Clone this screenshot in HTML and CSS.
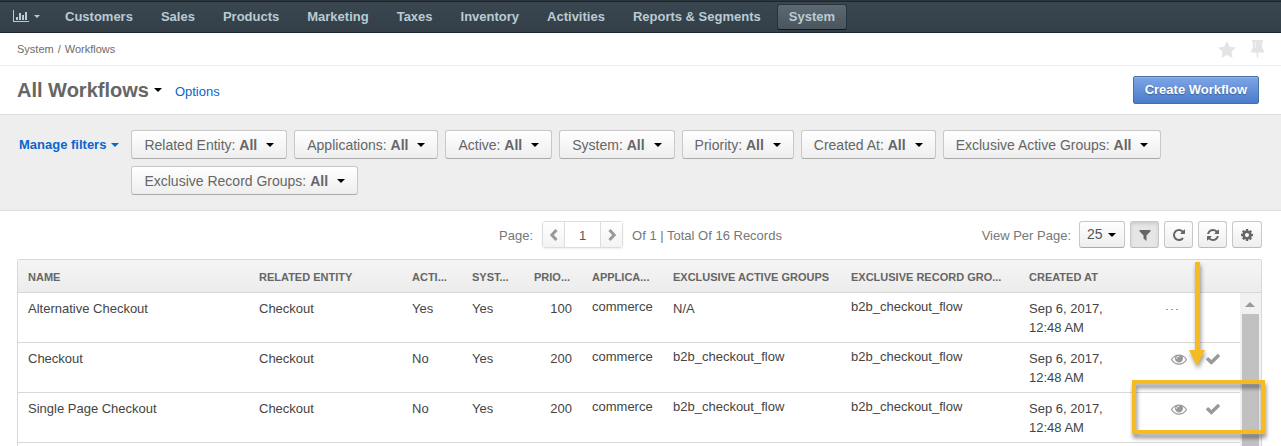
FILE: index.html
```html
<!DOCTYPE html>
<html lang="en">
<head>
<meta charset="utf-8">
<title>All Workflows</title>
<link rel="stylesheet" href="styles.css">
</head>
<body>
<svg class="defs" aria-hidden="true">
  <symbol id="caret" viewBox="0 0 8 4"><path d="M0 0h8L4 4z"/></symbol>
  <symbol id="eye" viewBox="0 0 1792 1792"><path d="M1664 960q-152-236-381-353 61 104 61 225 0 185-131.500 316.500t-316.500 131.500-316.500-131.500-131.500-316.500q0-121 61-225-229 117-381 353 133 205 333.500 326.500t434.500 121.500 434.500-121.500 333.500-326.500zm-720-384q0-20-14-34t-34-14q-125 0-214.500 89.500t-89.500 214.500q0 20 14 34t34 14 34-14 14-34q0-86 61-147t147-61q20 0 34-14t14-34zm848 384q0 34-20 69-140 230-376.500 368.500t-499.500 138.500-499.500-139-376.500-368q-20-35-20-69t20-69q140-229 376.500-368t499.500-139 499.500 139 376.500 368q20 35 20 69z"/></symbol>
  <symbol id="check" viewBox="0 0 1792 1792"><path d="M1671 566q0 40-28 68l-860 860q-28 28-68 28t-68-28l-498-498q-28-28-28-68t28-68l136-136q28-28 68-28t68 28l294 295 656-657q28-28 68-28t68 28l136 136q28 28 28 68z"/></symbol>
</svg>

<div class="usage-strip"></div>
<nav class="nav" aria-label="Main">
  <button class="nav-item nav-dash" type="button" aria-label="Dashboards">
    <svg class="chart" viewBox="0 0 16 12"><path d="M0 0h1v11h15v1H0zM3 7h2v3H3zM6 3h2v7H6zM9 5h2v5H9zM12 2h2v8h-2z"/></svg>
    <svg class="caret caret-small"><use href="#caret"/></svg>
  </button>
  <a class="nav-item" href="#">Customers</a>
  <a class="nav-item" href="#">Sales</a>
  <a class="nav-item" href="#">Products</a>
  <a class="nav-item" href="#">Marketing</a>
  <a class="nav-item" href="#">Taxes</a>
  <a class="nav-item" href="#">Inventory</a>
  <a class="nav-item" href="#">Activities</a>
  <a class="nav-item" href="#">Reports &amp; Segments</a>
  <a class="nav-item nav-active" href="#" aria-current="page">System</a>
</nav>

<div class="crumbs">
  <span>System</span><span class="slash">/</span><span>Workflows</span>
  <div class="crumb-tools">
    <button class="ghost" type="button" aria-label="Add to favorites"><svg class="star" viewBox="0 0 18 17"><path d="M9 0l2.700 5.700 6.300.8-4.600 4.300L14.600 17 9 14l-5.600 3 1.200-6.200L0 6.500l6.300-.8z"/></svg></button>
    <button class="ghost" type="button" aria-label="Pin"><svg class="pin" viewBox="0 0 13 18"><path d="M1 0h11v2h-1v6q2 1 2 4.500H7.500L7 18H6l-.5-5.500H0Q0 9 2 8V2H1z"/><path class="pin-shine" d="M4 2h1v6H4z"/></svg></button>
  </div>
</div>

<header class="title-bar">
  <h1>All Workflows</h1>
  <svg class="caret dark"><use href="#caret"/></svg>
  <a class="options" href="#">Options</a>
  <button class="primary" type="button">Create Workflow</button>
</header>

<section class="filters" aria-label="Filters">
  <button class="manage" type="button">Manage filters <svg class="caret"><use href="#caret"/></svg></button>
  <div class="filter-list">
    <button class="filter" type="button"><span>Related Entity: <b>All</b></span><svg class="caret dark"><use href="#caret"/></svg></button>
    <button class="filter" type="button"><span>Applications: <b>All</b></span><svg class="caret dark"><use href="#caret"/></svg></button>
    <button class="filter" type="button"><span>Active: <b>All</b></span><svg class="caret dark"><use href="#caret"/></svg></button>
    <button class="filter" type="button"><span>System: <b>All</b></span><svg class="caret dark"><use href="#caret"/></svg></button>
    <button class="filter" type="button"><span>Priority: <b>All</b></span><svg class="caret dark"><use href="#caret"/></svg></button>
    <button class="filter" type="button"><span>Created At: <b>All</b></span><svg class="caret dark"><use href="#caret"/></svg></button>
    <button class="filter" type="button"><span>Exclusive Active Groups: <b>All</b></span><svg class="caret dark"><use href="#caret"/></svg></button>
    <button class="filter" type="button"><span>Exclusive Record Groups: <b>All</b></span><svg class="caret dark"><use href="#caret"/></svg></button>
  </div>
</section>

<div class="toolbar">
  <div class="pagination">
    <label for="page">Page:</label>
    <div class="pager">
      <button type="button" aria-label="Previous page"><svg viewBox="0 0 8 12"><path d="M6.500 1L1.800 6l4.700 5"/></svg></button>
      <input id="page" type="text" value="1">
      <button type="button" aria-label="Next page"><svg viewBox="0 0 8 12"><path d="M1.500 1l4.700 5-4.700 5"/></svg></button>
    </div>
    <span class="total">Of 1 | Total Of 16 Records</span>
  </div>
  <div class="view">
    <label for="per-page">View Per Page:</label>
    <div class="select-wrap">
      <select id="per-page"><option>25</option><option>50</option></select>
      <svg class="caret dark"><use href="#caret"/></svg>
    </div>
    <button class="tool pressed" type="button" aria-label="Filters"><svg viewBox="0 0 14 14"><path d="M1.500 2h11v1.200L8.500 7.500V13l-3-2.500v-3l-4-4.300z"/></svg></button>
    <button class="tool" type="button" aria-label="Refresh"><svg viewBox="0 0 1536 1536"><path d="M1536 128v448q0 26-19 45t-45 19h-448q-42 0-59-40-17-39 14-69l138-138q-148-137-349-137-104 0-198.500 40.500t-163.500 109.500-109.500 163.500-40.500 198.500 40.500 198.500 109.500 163.500 163.500 109.500 198.500 40.500q119 0 225-52t179-147q7-10 23-12 14 0 25 9l137 138q9 8 9.500 20.500t-7.500 22.500q-109 132-264 204.500t-327 72.500q-156 0-298-61t-245-164-164-245-61-298 61-298 164-245 245-164 298-61q147 0 284.500 55.500t244.500 156.500l130-129q29-31 70-14 39 17 39 59z"/></svg></button>
    <button class="tool" type="button" aria-label="Reset"><svg viewBox="0 0 1536 1536"><path d="M1511 928q0 5-1 7-64 268-268 434.500t-478 166.500q-146 0-282.500-55t-243.500-157l-129 129q-19 19-45 19t-45-19-19-45v-448q0-26 19-45t45-19h448q26 0 45 19t19 45-19 45l-137 137q71 66 161 102t187 36q134 0 250-65t186-179q11-17 53-117 8-23 30-23h192q13 0 22.500 9.500t9.500 22.500zm25-800v448q0 26-19 45t-45 19h-448q-26 0-45-19t-19-45 19-45l138-138q-148-137-349-137-134 0-250 65t-186 179q-11 17-53 117-8 23-30 23H50q-13 0-22.500-9.500T18 608v-7q65-268 270-434.500T768 0q146 0 284 55.500t245 156.500l130-129q19-19 45-19t45 19 19 45z"/></svg></button>
    <button class="tool tool-settings" type="button" aria-label="Grid settings"><svg viewBox="0 0 1536 1536"><path d="M1024 768q0-106-75-181t-181-75-181 75-75 181 75 181 181 75 181-75 75-181zm512-109v222q0 12-8 23t-20 13l-185 28q-19 54-39 91 35 50 107 138 10 12 10 25t-9 23q-27 37-99 108t-94 71q-12 0-26-9l-138-108q-44 23-91 38-16 136-29 186-7 28-36 28H657q-14 0-24.500-8.500T621 1506l-28-184q-49-16-90-37l-141 107q-10 9-25 9-14 0-25-11-126-114-165-168-7-10-7-23 0-12 8-23 15-21 51-66.500t54-70.500q-27-50-41-99L29 913q-13-2-21-12.500T0 877V655q0-12 8-23t19-13l186-28q14-46 39-92-40-57-107-138-10-12-10-24 0-10 9-23 26-36 98.500-107.500T337 135q13 0 26 10l138 107q44-23 91-38 16-136 29-186 7-28 36-28h222q14 0 24.500 8.500T915 30l28 184q49 16 90 37l142-107q9-9 24-9 13 0 25 10 129 119 165 170 7 8 7 22 0 12-8 23-15 21-51 66.500t-54 70.500q26 50 41 98l183 28q13 2 21 12.500t8 23.500z"/></svg></button>
  </div>
</div>

<main class="grid-area">
  <div class="grid-panel">
    <table>
      <colgroup>
        <col class="c-name"><col class="c-entity"><col class="c-active"><col class="c-system"><col class="c-priority"><col class="c-apps"><col class="c-group"><col class="c-group"><col class="c-created"><col class="c-actions"><col class="c-scroll">
      </colgroup>
      <thead>
        <tr><th>Name</th><th>Related Entity</th><th>Acti...</th><th>Syst...</th><th>Prio...</th><th>Applica...</th><th>Exclusive Active Groups</th><th>Exclusive Record Gro...</th><th>Created At</th><th></th><th></th></tr>
      </thead>
      <tbody>
        <tr>
          <td>Alternative Checkout</td><td>Checkout</td><td>Yes</td><td>Yes</td><td class="num">100</td><td class="list">commerce</td><td>N/A</td><td class="list">b2b_checkout_flow</td><td>Sep 6, 2017, 12:48 AM</td>
          <td><button class="more" type="button" aria-label="More actions"><svg viewBox="0 0 12 2"><path d="M0 0h2v1H0zM5 0h2v1H5zM10 0h2v1h-2z"/></svg></button></td>
          <td class="scroll" rowspan="4"><svg viewBox="0 0 10 5"><path d="M5 0l5 5H0z"/></svg></td>
        </tr>
        <tr>
          <td>Checkout</td><td>Checkout</td><td>No</td><td>Yes</td><td class="num">200</td><td class="list">commerce</td><td class="list">b2b_checkout_flow</td><td class="list">b2b_checkout_flow</td><td>Sep 6, 2017, 12:48 AM</td>
          <td><div class="actions"><button type="button" aria-label="View"><svg><use href="#eye"/></svg></button><button type="button" aria-label="Activate"><svg><use href="#check"/></svg></button></div></td>
        </tr>
        <tr>
          <td>Single Page Checkout</td><td>Checkout</td><td>No</td><td>Yes</td><td class="num">200</td><td class="list">commerce</td><td class="list">b2b_checkout_flow</td><td class="list">b2b_checkout_flow</td><td>Sep 6, 2017, 12:48 AM</td>
          <td><div class="actions"><button type="button" aria-label="View"><svg><use href="#eye"/></svg></button><button type="button" aria-label="Activate"><svg><use href="#check"/></svg></button></div></td>
        </tr>
        <tr><td></td><td></td><td></td><td></td><td></td><td></td><td></td><td></td><td></td><td></td></tr>
      </tbody>
    </table>
  </div>
  <svg class="arrow" viewBox="0 0 16 104" aria-hidden="true"><path d="M6 0h5v88h5L8 104 0 88h6z"/></svg>
  <div class="callout"></div>
</main>
</body>
</html>
```
FILE: styles.css
```css
* { box-sizing: border-box; }

body {
  margin: 0;
  height: 100vh;
  overflow: hidden;
  display: flex;
  flex-direction: column;
  background: #fff;
  color: #444;
  font: 13px/19px "Liberation Sans", Arial, sans-serif;
}

body > * { flex-shrink: 0; }
a { text-decoration: none; }
button, input, select { font: inherit; color: inherit; margin: 0; }
button { cursor: pointer; padding: 0; border: 0; background: none; }
svg { display: block; fill: currentColor; }
.defs { position: absolute; width: 0; height: 0; }
.caret { width: 8px; height: 4px; }
.caret-small { width: 6px; height: 3px; }
.dark { color: #000; }

/* Header */
.usage-strip { height: 2px; background: #2a343c; border-bottom: 1px solid #1b252d; }

.nav {
  display: flex;
  align-items: center;
  gap: 4px;
  height: 31px;
  padding: 0 13px 1px 1px;
  background: linear-gradient(#3a4750, #343f48);
  border-bottom: 1px solid #1c262e;
  font-weight: bold;
}

.nav-item {
  display: flex;
  align-items: center;
  height: 26px;
  padding: 0 11px 1px;
  border: 1px solid transparent;
  border-radius: 3px;
  color: #b9cbd3;
}

.nav-dash { gap: 5px; padding-right: 8px; }
.chart { width: 16px; height: 12px; }

.nav-active {
  background: linear-gradient(#5c6872, #4a555d);
  border-color: #28323a;
  border-bottom-color: #10181e;
}

/* Breadcrumbs and title */
.crumbs {
  display: flex;
  align-items: center;
  height: 33px;
  padding: 0 17px;
  border-bottom: 1px solid #eee;
  color: #6c6c6c;
  font-size: 11px;
}

.slash { margin: 0 4px; }
.crumb-tools { display: flex; align-items: center; gap: 15px; margin-left: auto; }
.ghost { color: #e4e4e4; }
.star { width: 18px; height: 17px; }
.pin { width: 13px; height: 18px; }
.pin-shine { fill: #f4f4f4; }

.title-bar {
  display: flex;
  align-items: center;
  height: 49px;
  padding: 0 22px 0 17px;
  border-bottom: 1px solid #ddd;
}

h1 { margin: 0 5px 0 0; font-size: 20px; line-height: 24px; color: #666; }
.options { margin-left: 13px; padding-top: 2px; color: #0a66cc; }

.primary {
  height: 28px;
  margin-left: auto;
  padding: 0 11px 1px;
  border: 1px solid #4a6fa5;
  border-radius: 2px;
  background: linear-gradient(#7ea6e6, #4a7bc9);
  box-shadow: inset 0 1px 0 #94b4ea;
  color: #fff;
  font-weight: bold;
  text-shadow: 0 1px 1px #3c5f96;
}

/* Filters */
.filters {
  display: flex;
  align-items: flex-start;
  gap: 12px;
  padding: 15px 19px;
  border-bottom: 1px solid #ddd;
  background: #eee;
}

.manage {
  display: flex;
  align-items: center;
  gap: 5px;
  height: 29px;
  color: #0a66cc;
  font-weight: bold;
  white-space: nowrap;
}

.filter-list { display: flex; flex-wrap: wrap; gap: 7px; }

.filter {
  display: flex;
  align-items: center;
  gap: 9px;
  height: 29px;
  padding: 0 12px;
  border: 1px solid #c8c8c8;
  border-bottom-color: #aaa;
  border-radius: 3px;
  background: linear-gradient(#fff, #eee);
  color: #666;
  font-size: 14px;
}

.filter span { padding-top: 2px; }

/* Toolbar */
.toolbar {
  display: grid;
  grid-template-columns: 1fr auto 1fr;
  align-items: center;
  padding: 10px 19px 11px;
  color: #777;
}

.toolbar label, .total { padding-top: 2px; }
.pagination { display: flex; align-items: center; gap: 9px; grid-column: 2; }

.pager {
  display: flex;
  height: 27px;
  border: 1px solid #ddd;
  border-radius: 3px;
  box-shadow: 0 1px 2px #eee;
}

.pager button {
  display: grid;
  place-items: center;
  width: 21px;
  background: linear-gradient(#fff, #f3f3f3);
  color: #999;
}

.pager svg { width: 8px; height: 12px; fill: none; stroke: currentColor; stroke-width: 3; }

.pager input {
  width: 37px;
  padding: 2px 0 0;
  border: 1px solid #ddd;
  border-width: 0 1px;
  color: #555;
  text-align: center;
}

.view { display: flex; align-items: center; justify-content: flex-end; gap: 5px; }
.view label { margin-right: 3px; }
.select-wrap { position: relative; }
.select-wrap .caret { position: absolute; right: 9px; top: 12px; pointer-events: none; }

.select-wrap select {
  display: block;
  appearance: none;
  width: 46px;
  padding: 0 0 0 7px;
  font-size: 14px;
  color: #555;
}

.select-wrap select, .tool {
  height: 27px;
  border: 1px solid #c8c8c8;
  border-bottom-color: #aaa;
  border-radius: 3px;
  background: linear-gradient(#fff, #eee);
}

.tool { display: grid; place-items: center; width: 29px; border-bottom-color: #bbb; color: #666; }
.tool svg { width: 12px; height: 12px; }
.tool-settings { width: 30px; }
.pressed { background: #e6e6e6; box-shadow: inset 0 2px 3px #ccc; }
.pressed svg { width: 14px; height: 14px; }

/* Grid */
.grid-area { position: relative; flex: 1 0 0; min-height: 0; display: flex; margin: 0 19px 0 17px; }

.grid-panel {
  flex: 1;
  min-width: 0;
  overflow: hidden;
  border: 1px solid #d8d8d8;
  border-bottom: 0;
  border-radius: 3px 3px 0 0;
}

table { width: 100%; table-layout: fixed; border-collapse: separate; border-spacing: 0; }
.c-name { width: 231px; }
.c-entity { width: 153px; }
.c-active { width: 60px; }
.c-system { width: 62px; }
.c-priority { width: 58px; }
.c-apps { width: 81px; }
.c-group { width: 178px; }
.c-created { width: 110px; }
.c-actions { width: 111px; }
.c-scroll { width: 21px; }

thead tr { background: linear-gradient(#f5f5f5, #ececec); }

th {
  height: 33px;
  padding: 2px 0 0 10px;
  border-bottom: 1px solid #d8d8d8;
  overflow: hidden;
  color: #666;
  font-size: 11px;
  text-align: left;
  text-transform: uppercase;
  white-space: nowrap;
}

td { height: 50px; padding: 6px 10px 5px; border-bottom: 1px solid #d8d8d8; vertical-align: top; }
.num { text-align: right; }
.list { line-height: 16px; }

.actions { display: flex; justify-content: flex-end; gap: 18px; padding: 0 9px 0 0; color: #999; }
.actions svg { width: 16px; height: 20px; }
.more { display: flex; height: 22px; align-items: center; margin-left: 27px; color: #999; }
.more svg { width: 12px; height: 2px; }

.scroll {
  padding: 9px 0 0 5px;
  border: 0;
  background: linear-gradient(#c1c1c1, #c1c1c1) 2px 21px / 17px 100% no-repeat, #f1f1f1;
  color: #999;
}

.scroll svg { width: 10px; height: 5px; }

/* Highlight marks over the grid */
.arrow {
  position: absolute;
  top: 3px;
  right: 57px;
  width: 16px;
  height: 104px;
  color: #f4bc22;
  overflow: visible;
  filter: drop-shadow(1px 3px 2px #0006);
}

.callout {
  position: absolute;
  top: 121px;
  right: -3px;
  width: 133px;
  height: 54px;
  border: 4px solid #f4bc22;
  filter: drop-shadow(1px 4px 2px #0007);
}
```
